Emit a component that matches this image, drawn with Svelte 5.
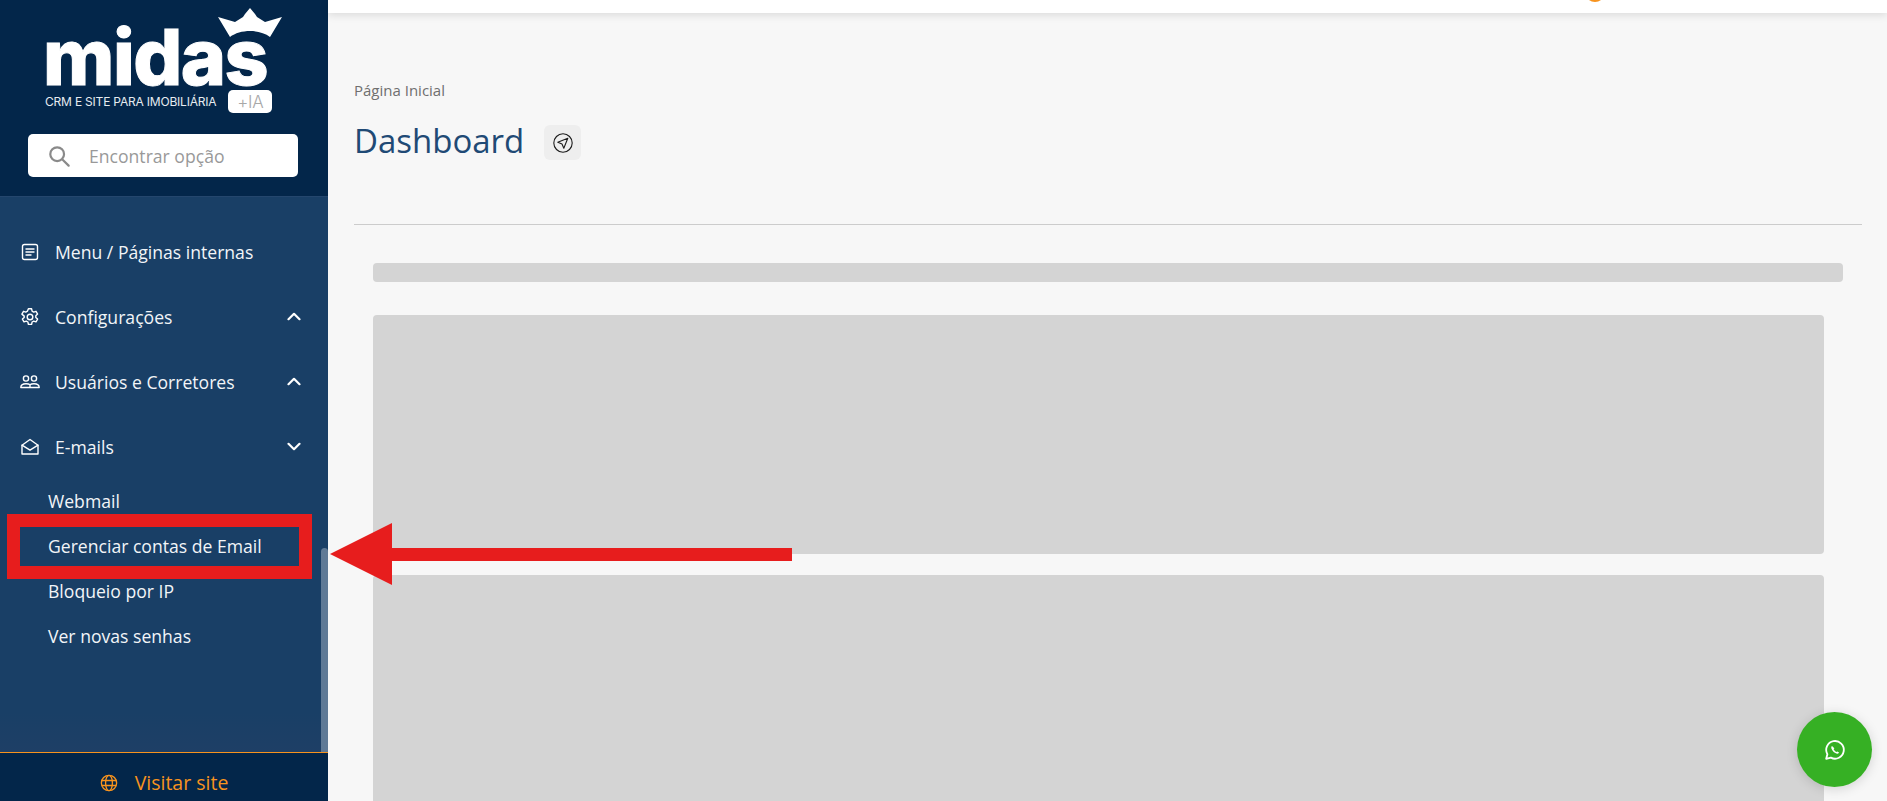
<script>
  const menu = [
    { label: 'Menu / Páginas internas', icon: 'page' },
    { label: 'Configurações', icon: 'gear', caret: 'up' },
    { label: 'Usuários e Corretores', icon: 'users', caret: 'up' },
    { label: 'E-mails', icon: 'mail', caret: 'down' }
  ];
  const subItems = ['Webmail', 'Gerenciar contas de Email', 'Bloqueio por IP', 'Ver novas senhas'];
</script>

<div class="layout">
  <aside class="sidebar">
    <div class="brand">
      <div class="logo">
        <div class="wordmark">midas</div>
        <svg class="crown" viewBox="0 0 64 30" aria-hidden="true">
          <path d="M0 9 L17 14 L25 9 L27 6 L32 0 L37 6 L39 9 L47 14 L64 9 L52 29 C42 21 22 21 12 29 Z" fill="#fff"/>
        </svg>
        <div class="tagline">
          <span class="claim">CRM E SITE PARA IMOBILIÁRIA</span>
          <span class="badge">+IA</span>
        </div>
      </div>
      <div class="search">
        <svg viewBox="0 0 24 24" width="22" height="22" fill="none" stroke="#8a8a8a" stroke-width="2.4" stroke-linecap="round">
          <circle cx="10" cy="10" r="7.5"/><path d="M16 16l6.5 6.5"/>
        </svg>
        <span>Encontrar opção</span>
      </div>
    </div>

    <nav class="nav">
      <div class="thumb"></div>
      {#each menu as item}
        <div class="item">
          <svg class="ico" viewBox="0 0 20 20" fill="none" stroke="#fff" stroke-width="1.4" stroke-linecap="round" stroke-linejoin="round">
            {#if item.icon === 'page'}
              <rect x="2.5" y="2.5" width="15" height="15" rx="2"/><path d="M6 7h8M6 10h8M6 13h5"/>
            {:else if item.icon === 'gear'}
              <circle cx="10" cy="10" r="2.8"/>
              <path d="M8.4 1.8h3.2l.5 2.4 1.6.9 2.3-.8 1.6 2.8-1.8 1.6v1.8l1.8 1.6-1.6 2.8-2.3-.8-1.6.9-.5 2.4H8.4l-.5-2.4-1.6-.9-2.3.8-1.6-2.8 1.8-1.6V9.1L1.9 7.1l1.6-2.8 2.3.8 1.6-.9z"/>
            {:else if item.icon === 'users'}
              <circle cx="6" cy="6.5" r="2.6"/><circle cx="14" cy="6.5" r="2.6"/>
              <path d="M.8 15.5c0-2.800 2-3.800 5.200-3.800 1.800 0 3.200.3 4 1.100.8-.8 2.200-1.100 4-1.100 3.200 0 5.200 1 5.200 3.800zM10 12.800v2.700"/>
            {:else}
              <path d="M2 8.200 10 2.500l8 5.700V17H2z"/><path d="M2 8.200l8 5 8-5"/>
            {/if}
          </svg>
          <span class="label">{item.label}</span>
          {#if item.caret}
            <svg class="caret" class:down={item.caret === 'down'} viewBox="0 0 14 9" fill="none" stroke="#fff" stroke-width="2.200" stroke-linecap="round" stroke-linejoin="round">
              <path d="M1.500 7.200 7 1.800l5.500 5.400"/>
            </svg>
          {/if}
        </div>
      {/each}
      <div class="sub">
        {#each subItems as s}
          <div class="sub-item">{s}</div>
        {/each}
      </div>
    </nav>

    <div class="visit">
      <svg viewBox="0 0 20 20" width="18" height="18" fill="none" stroke="#f7931e" stroke-width="1.500">
        <circle cx="10" cy="10" r="8.500"/><ellipse cx="10" cy="10" rx="3.800" ry="8.500"/><path d="M2 7.200h16M2 12.800h16"/>
      </svg>
      <span>Visitar site</span>
    </div>
  </aside>

  <div class="page">
    <header class="topbar"><span class="avatar"></span></header>
    <main class="content">
      <div class="crumb">Página Inicial</div>
      <div class="title-row">
        <h1>Dashboard</h1>
        <div class="nav-btn">
          <svg viewBox="0 0 20 20" width="20" height="20" fill="none" stroke="#1c1c1c" stroke-width="1.100" stroke-linejoin="round">
            <circle cx="10" cy="10" r="9.200"/><path d="M14.800 5.200 4.800 9.200l4.200 1.800 1.800 4.200z"/>
          </svg>
        </div>
      </div>
      <hr />
      <div class="skeleton">
        <div class="bar"></div>
        <div class="card first"></div>
        <div class="card second"></div>
      </div>
    </main>
  </div>
</div>

<!-- tutorial annotation on top of the screenshot -->
<div class="highlight"></div>
<svg class="arrow" viewBox="0 0 462 62" width="462" height="62" aria-hidden="true">
  <path d="M0 31 62 0V25H462V38H62V62Z" fill="#e71d1d"/>
</svg>

<div class="whatsapp">
  <svg viewBox="0 0 24 24" width="22" height="22" fill="none" stroke="#fff" stroke-width="2">
    <path d="M2.400 21.600l1.300-5A9.600 9.600 0 1 1 7.500 20.300z" stroke-linejoin="round"/>
    <path d="M8.700 7.500c-.8.700-1 1.700-.5 3 .9 2.400 3 4.500 5.400 5.300 1.300.4 2.300.2 3-.7l-2-1.600-1.100.8c-1.300-.6-2.400-1.700-3-3l.8-1.100z" fill="#fff" stroke="none"/>
  </svg>
</div>

<style>
  :global(body) {
    overflow: hidden;
    font-family: "Open Sans", "Liberation Sans", sans-serif;
    background: #f7f7f7;
  }

  .layout {
    display: flex;
    height: 801px;
    overflow: hidden;
  }

  .sidebar {
    width: 328px;
    flex: none;
    height: 812px;
    display: flex;
    flex-direction: column;
    background: #193f66;
    color: #fff;
  }

  .brand {
    height: 197px;
    flex: none;
    box-sizing: border-box;
    background: #03264a;
    border-bottom: 1px solid #24466d;
    padding: 0 30px 0 28px;
  }

  .logo {
    position: relative;
    height: 134px;
  }

  .wordmark {
    position: absolute;
    left: 15px;
    top: 24px;
    font-family: Inter, "Open Sans", sans-serif;
    font-weight: 800;
    font-size: 77px;
    line-height: 66px;
    letter-spacing: -1.500px;
    color: #fff;
    -webkit-text-stroke: 1px #fff;
  }

  .crown {
    position: absolute;
    left: 190px;
    top: 8px;
    width: 64px;
    height: 30px;
  }

  .tagline {
    position: absolute;
    left: 17px;
    top: 90px;
    display: flex;
    align-items: center;
    gap: 12px;
    font-family: Inter, sans-serif;
    font-size: 12px;
    letter-spacing: -0.200px;
    color: #e6ebf0;
    white-space: nowrap;
  }

  .badge {
    width: 44px;
    height: 23px;
    border-radius: 5px;
    background: #fff;
    color: #a8a8a8;
    font-size: 17px;
    font-weight: 300;
    display: flex;
    align-items: center;
    justify-content: center;
  }

  .search {
    height: 43px;
    background: #fff;
    border-radius: 5px;
    display: flex;
    align-items: center;
    gap: 19px;
    padding-left: 20px;
    color: #999;
    font-size: 17.600px;
  }

  .nav {
    position: relative;
    flex: none;
    height: 555px;
    box-sizing: border-box;
    padding-top: 22px;
    background: linear-gradient(#193f66 93%, #1e3f66);
  }

  .thumb {
    position: absolute;
    top: 351px;
    bottom: 0;
    right: 0;
    width: 7px;
    background: #5f7a96;
    border-radius: 4px 4px 0 0;
  }

  .item {
    height: 65px;
    display: flex;
    align-items: center;
    padding-left: 20px;
    font-size: 17.600px;
    color: #f2f5f8;
  }

  .ico {
    width: 20px;
    height: 20px;
    flex: none;
    margin-right: 15px;
  }

  .label {
    flex: 1;
  }

  .caret {
    width: 14px;
    height: 9px;
    margin-right: 27px;
  }

  .caret.down {
    transform: rotate(180deg);
  }

  .sub {
    padding: 0 0 0 48px;
  }

  .sub-item {
    height: 45px;
    line-height: 45px;
    font-size: 17.600px;
    color: #f2f5f8;
  }

  .visit {
    height: 60px;
    flex: none;
    box-sizing: border-box;
    background: #03264a;
    border-top: 1px solid #f7931e;
    display: flex;
    align-items: center;
    justify-content: center;
    gap: 17px;
    color: #f7931e;
    font-size: 19.500px;
  }

  .page {
    flex: 1;
    min-width: 0;
    display: flex;
    flex-direction: column;
  }

  .topbar {
    position: relative;
    height: 13px;
    flex: none;
    background: #fff;
    box-shadow: 0 2px 8px rgba(0, 0, 0, 0.12);
    overflow: hidden;
  }

  .avatar {
    position: absolute;
    left: 1257px;
    top: -18px;
    width: 20px;
    height: 20px;
    border-radius: 50%;
    background: #f7931e;
  }

  .content {
    flex: 1;
    padding: 68px 25px 0 26px;
  }

  .crumb {
    font-size: 15px;
    line-height: 19px;
    color: #6f6f6f;
  }

  .title-row {
    display: flex;
    align-items: center;
    gap: 20px;
    margin-top: 18px;
  }

  h1 {
    margin: 0;
    font-size: 33px;
    line-height: 45px;
    font-weight: 400;
    color: #1f4a75;
  }

  .nav-btn {
    width: 37px;
    height: 35px;
    border-radius: 6px;
    background: #eeeeee;
    display: flex;
    align-items: center;
    justify-content: center;
    margin-top: 4px;
  }

  hr {
    margin: 61px 0 0;
    border: 0;
    border-top: 1px solid #cccccc;
  }

  .skeleton {
    padding: 38px 19px 0 19px;
  }

  .bar {
    height: 19px;
    border-radius: 4px;
    background: #d4d4d4;
  }

  .card {
    background: #d4d4d4;
    border-radius: 4px;
    margin-right: 19px;
  }

  .first {
    height: 239px;
    margin-top: 33px;
  }

  .second {
    height: 400px;
    margin-top: 21px;
  }

  .highlight {
    position: fixed;
    left: 7px;
    top: 514px;
    width: 305px;
    height: 65px;
    box-sizing: border-box;
    border: 13px solid #e71d1d;
  }

  .arrow {
    position: fixed;
    left: 330px;
    top: 523px;
  }

  .whatsapp {
    position: fixed;
    left: 1797px;
    top: 712px;
    width: 75px;
    height: 75px;
    border-radius: 50%;
    background: #36b024;
    box-shadow: 0 2px 12px rgba(0, 0, 0, 0.15);
    display: flex;
    align-items: center;
    justify-content: center;
  }
</style>
